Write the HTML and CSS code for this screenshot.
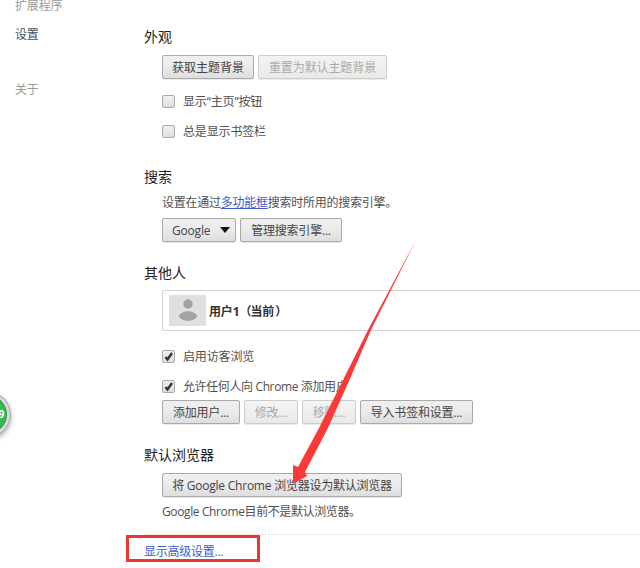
FILE: index.html
```html
<!DOCTYPE html>
<html lang="zh-CN">
<head>
<meta charset="utf-8">
<title>设置</title>
<link rel="stylesheet" href="styles.css">
</head>
<body>
<div class="page">
  <nav class="sidebar">
    <div class="nav-item">扩展程序</div>
    <div class="nav-item current">设置</div>
    <div class="nav-item about">关于</div>
  </nav>
  <main class="content">
    <section class="appearance">
      <h3>外观</h3>
      <div class="body">
        <div class="buttons"><button class="w92">获取主题背景</button><button class="w129" disabled>重置为默认主题背景</button></div>
        <label class="check first"><span class="box"></span><span class="label">显示“主页”按钮</span></label>
        <label class="check"><span class="box"></span><span class="label">总是显示书签栏</span></label>
      </div>
    </section>
    <section class="search">
      <h3>搜索</h3>
      <div class="body">
        <p>设置在通过<a href="#">多功能框</a>搜索时所用的搜索引擎。</p>
        <div class="buttons"><button class="select">Google<svg width="10" height="6" viewBox="0 0 10 6"><path d="M0 0H10L5 6Z"/></svg></button><button class="w102">管理搜索引擎...</button></div>
      </div>
    </section>
    <section class="people">
      <h3>其他人</h3>
      <div class="body">
        <div class="user">
          <svg class="avatar" width="37" height="31" viewBox="0 0 37 31"><path fill="#e0e0e0" d="M0 0H37V31H0Z"/><circle cx="19" cy="9" r="4.7" fill="#a3a3a3"/><path fill="#a3a3a3" d="M9.500 21C13 14.700 25 14.700 28.500 21C25 27.500 13 27.500 9.500 21Z"/></svg>
          <span class="name">用户1<span class="paren">（</span>当前<span class="paren close">）</span></span>
        </div>
        <label class="check guest"><span class="box"><svg width="12" height="12" viewBox="0 0 12 12"><path d="M2.500 6L4.500 8.500L9 2"/></svg></span><span class="label">启用访客浏览</span></label>
        <label class="check"><span class="box"><svg width="12" height="12" viewBox="0 0 12 12"><path d="M2.500 6L4.500 8.500L9 2"/></svg></span><span class="label tight">允许任何人向 Chrome 添加用户</span></label>
        <div class="buttons"><button class="w78">添加用户...</button><button class="w54" disabled>修改...</button><button class="w54" disabled>移除...</button><button class="w113">导入书签和设置...</button></div>
      </div>
    </section>
    <section class="default">
      <h3>默认浏览器</h3>
      <div class="body">
        <div class="buttons"><button class="w240">将 Google Chrome 浏览器设为默认浏览器</button></div>
        <p class="tight">Google Chrome目前不是默认浏览器。</p>
      </div>
    </section>
    <footer><a href="#">显示高级设置...</a></footer>
  </main>
  <div class="badge">9</div>
  <div class="highlight"></div>
  <svg class="arrow" width="640" height="568" viewBox="0 0 640 568"><path fill="#fb3a37" d="M416 240L371 330L349 381L327 430L305 472L307 476L293 484V465L298 467L319 428L343 380L368 330Z"/></svg>
</div>
</body>
</html>
```
FILE: styles.css
```css
* { box-sizing: border-box; }
body {
  margin: 0;
  background: #fff;
  color: #505050;
  font: 12px/20px "Open Sans", "Noto Sans CJK SC", sans-serif;
  letter-spacing: -.15px;
}
.page {
  position: relative;
  display: flex;
  width: 640px;
  height: 568px;
  overflow: hidden;
}
.sidebar { width: 144px; padding-left: 15px; color: #999; }
.nav-item { height: 20px; margin-top: -4px; }
.nav-item.current { margin-top: 9px; color: #464e5a; }
.nav-item.about { margin-top: 35px; }
.content { flex: 1; padding-top: 27px; }
h3 {
  margin: 0;
  height: 20px;
  font-size: 14px;
  font-weight: 400;
  line-height: 20px;
  letter-spacing: 0;
  color: #222;
}
p { margin: 0; height: 20px; line-height: 22px; letter-spacing: -.25px; white-space: nowrap; }
a { color: #3c5bd0; }
.body { padding-left: 18px; }
.buttons { display: flex; gap: 4px; height: 24px; }
button {
  flex: none;
  height: 24px;
  padding: 1px 0 0;
  border: 1px solid #aaa;
  border-radius: 2px;
  background: linear-gradient(#efefef, #ededed 38%, #dedede);
  box-shadow: 0 1px 0 rgba(0, 0, 0, .08);
  color: #444;
  font: inherit;
  line-height: 21px;
  letter-spacing: -.2px;
  white-space: nowrap;
}
button:disabled { border-color: #ccc; background: linear-gradient(#f4f4f4, #e9e9e9); color: #aaa; }
.w54 { width: 54px; }
.w78 { width: 78px; }
.w92 { width: 92px; letter-spacing: 0; }
.w102 { width: 102px; }
.w113 { width: 113px; }
.w129 { width: 129px; letter-spacing: -.1px; }
.w240 { width: 240px; letter-spacing: -.23px; }
.select {
  display: flex;
  align-items: center;
  justify-content: space-between;
  width: 74px;
  padding: 0 5px 0 9px;
}
.select svg { fill: #111; }
.check { display: flex; align-items: center; height: 20px; margin-top: 10px; }
.check.first { margin-top: 12px; }
.check.guest { margin-top: 15px; }
.label { line-height: 20px; padding-top: 2px; }
.tight { letter-spacing: -.38px; }
.box {
  display: flex;
  width: 13px;
  height: 13px;
  margin-right: 8px;
  border: 1px solid #aaa;
  border-radius: 2px;
  background: linear-gradient(#f0f0f0, #dedede);
}
.box svg { flex: none; fill: none; stroke: #333; stroke-width: 2.4; }
.appearance .buttons { margin-top: 8px; }
.search { margin-top: 26px; }
.search p { margin-top: 5px; }
.search .buttons { margin-top: 6px; }
.people { margin-top: 21px; }
.people .buttons { margin-top: 4px; }
.user {
  display: flex;
  align-items: center;
  height: 41px;
  margin-top: 7px;
  padding-left: 6px;
  border: 1px solid #d3d3d3;
  border-right: 0;
  border-radius: 2px 0 0 2px;
  color: #333;
  font-weight: 700;
}
.avatar { margin-right: 3px; }
.name { padding-top: 2px; }
.paren { letter-spacing: -1px; }
.paren.close { padding-left: 1px; }
.default { margin-top: 21px; }
.default .buttons { margin-top: 8px; }
.default p { margin-top: 4px; }
footer { height: 28px; margin-top: 13px; border-top: 1px solid #eee; line-height: 34px; }
footer a { text-decoration: none; letter-spacing: -.25px; }
.badge {
  position: absolute;
  left: -32px;
  top: 393px;
  width: 42px;
  height: 43px;
  padding-right: 3px;
  border: 3px solid #d6d6df;
  border-radius: 50%;
  background: #35bd53;
  box-shadow: 0 0 0 1px #aaaab2, 1px 3px 5px rgba(0, 0, 0, .3), inset 0 0 0 1px #278f3e;
  color: #fff;
  font-size: 10px;
  font-weight: 700;
  line-height: 37px;
  text-align: right;
}
.highlight {
  position: absolute;
  left: 126px;
  top: 535px;
  width: 134px;
  height: 27px;
  border: 3px solid #ef3436;
}
.arrow { position: absolute; left: 0; top: 0; pointer-events: none; }
```
